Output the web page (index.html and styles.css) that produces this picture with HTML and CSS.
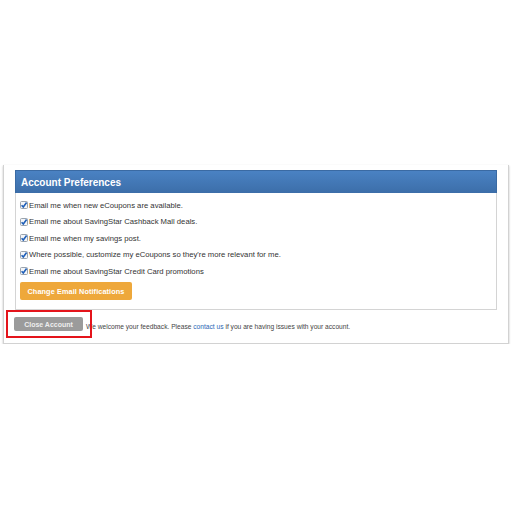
FILE: index.html
```html
<!DOCTYPE html>
<html lang="en">
<head>
<meta charset="UTF-8">
<meta name="viewport" content="width=device-width, initial-scale=1.0">
<title>Account Preferences</title>
<link rel="stylesheet" href="styles.css">
</head>
<body>

<div class="account-card">
  <div class="pref-panel">
    <div class="pref-heading">Account Preferences</div>
    <div class="pref-body">
      <label class="pref-row"><svg class="check" viewBox="0 0 8 8"><rect x="0.5" y="0.5" width="7" height="7" rx="1" fill="#f4f6f9" stroke="#9aa3ad"/><path d="M1.6 4.2 L3.3 6 L6.6 1.6" fill="none" stroke="#1f5fb8" stroke-width="1.6"/></svg>Email me when new eCoupons are available.</label>
      <label class="pref-row"><svg class="check" viewBox="0 0 8 8"><rect x="0.5" y="0.5" width="7" height="7" rx="1" fill="#f4f6f9" stroke="#9aa3ad"/><path d="M1.6 4.2 L3.3 6 L6.6 1.6" fill="none" stroke="#1f5fb8" stroke-width="1.6"/></svg>Email me about SavingStar Cashback Mall deals.</label>
      <label class="pref-row"><svg class="check" viewBox="0 0 8 8"><rect x="0.5" y="0.5" width="7" height="7" rx="1" fill="#f4f6f9" stroke="#9aa3ad"/><path d="M1.6 4.2 L3.3 6 L6.6 1.6" fill="none" stroke="#1f5fb8" stroke-width="1.6"/></svg>Email me when my savings post.</label>
      <label class="pref-row"><svg class="check" viewBox="0 0 8 8"><rect x="0.5" y="0.5" width="7" height="7" rx="1" fill="#f4f6f9" stroke="#9aa3ad"/><path d="M1.6 4.2 L3.3 6 L6.6 1.6" fill="none" stroke="#1f5fb8" stroke-width="1.6"/></svg>Where possible, customize my eCoupons so they're more relevant for me.</label>
      <label class="pref-row"><svg class="check" viewBox="0 0 8 8"><rect x="0.5" y="0.5" width="7" height="7" rx="1" fill="#f4f6f9" stroke="#9aa3ad"/><path d="M1.6 4.2 L3.3 6 L6.6 1.6" fill="none" stroke="#1f5fb8" stroke-width="1.6"/></svg>Email me about SavingStar Credit Card promotions</label>
      <button type="button" class="btn-orange">Change Email Notifications</button>
    </div>
  </div>

  <div class="close-row">
    <button type="button" class="btn-gray">Close Account</button>
    <span class="feedback">We welcome your feedback. Please <a href="#" class="feedback-link">contact us</a> if you are having issues with your account.</span>
  </div>

  <!-- highlight box drawn over the close button -->
  <div class="highlight"></div>
</div>

</body>
</html>
```

FILE: styles.css
```css
body {
  margin: 0;
  background-color: #fff;
  font-family: 'Liberation Sans', Arial, sans-serif;
  color: #333;
}

.account-card {
  position: relative;
  box-sizing: border-box;
  margin: 165px 0 0 3px;
  width: 506px;
  padding: 5px 11px 12px 11px;
  background-color: #fff;
  border: 1px solid #d2d2d2;
  border-top: none;
  box-shadow: 0 1px 2px rgba(0,0,0,.25);
}

.pref-panel {
  border: 1px solid #d4d4d4;
  border-top: none;
}

.pref-heading {
  height: 23px;
  line-height: 23px;
  padding-left: 5px;
  margin: 0 -1px;
  background: linear-gradient(#4a82c3, #3c6ea9);
  border: 1px solid #3a6aa3;
  border-bottom: none;
  color: #fff;
  font-weight: bold;
  font-size: 10px;
  box-sizing: border-box;
}

.pref-body {
  padding: 4px 5px 9px 4px;
}

.pref-row {
  display: flex;
  align-items: center;
  height: 16.5px;
  font-size: 7.7px;
  color: #333;
}

.check {
  width: 8px;
  height: 8px;
  margin-right: 1px;
}

.btn-orange {
  display: block;
  margin-top: 2.5px;
  height: 18px;
  width: 112px;
  padding: 0;
  border: none;
  border-radius: 2px;
  background-color: #eea83b;
  color: #fff;
  font-family: 'Liberation Sans', Arial, sans-serif;
  font-weight: bold;
  font-size: 7.3px;
  letter-spacing: 0.1px;
}

.close-row {
  display: flex;
  align-items: center;
  margin-top: 7px;
}

.btn-gray {
  height: 14px;
  width: 69px;
  padding: 0;
  margin-left: -1px;
  border: none;
  border-radius: 2px;
  background-color: #9b9b9b;
  color: #eee;
  font-family: 'Liberation Sans', Arial, sans-serif;
  font-weight: bold;
  font-size: 7px;
}

.feedback {
  margin-left: 3px;
  margin-top: 5px;
  font-size: 6.65px;
  color: #444;
}

.feedback-link {
  color: #2a67b5;
  text-decoration: none;
}

.highlight {
  position: absolute;
  left: 2px;
  top: 145px;
  width: 82px;
  height: 24px;
  border: 2px solid #e4141b;
}
```
